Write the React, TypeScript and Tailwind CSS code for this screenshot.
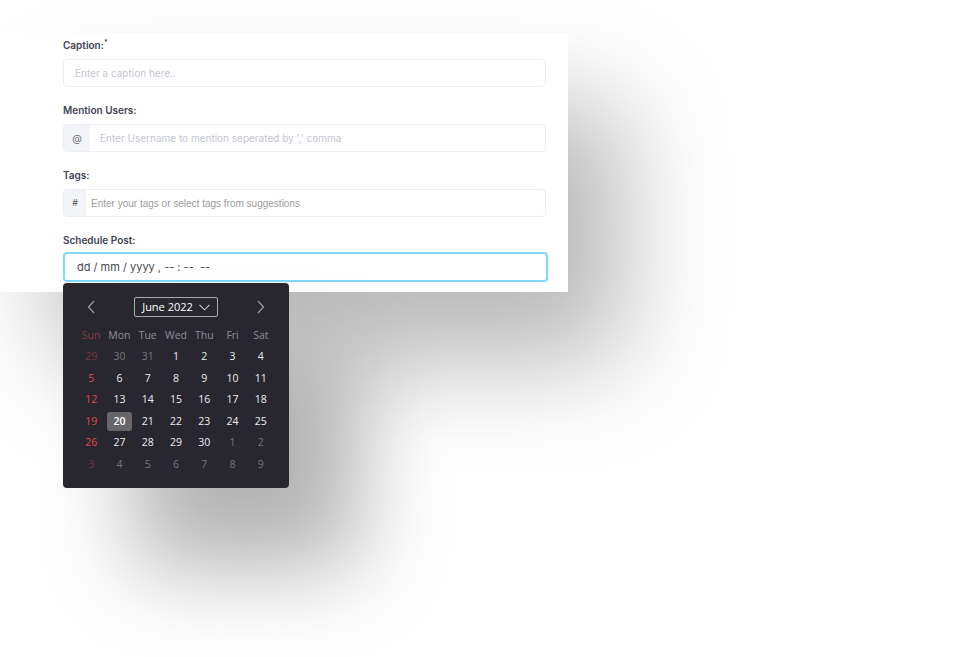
import React from 'react';

type Day = { d: number; muted?: boolean; sun?: boolean; sel?: boolean };

const weekdays = ['Sun', 'Mon', 'Tue', 'Wed', 'Thu', 'Fri', 'Sat'];

// 6 rows of June 2022, padded with May / July
function buildDays(): Day[] {
  const out: Day[] = [];
  [29, 30, 31].forEach((d) => out.push({ d, muted: true }));
  for (let d = 1; d <= 30; d++) out.push({ d, sel: d === 20 });
  for (let d = 1; d <= 9; d++) out.push({ d, muted: true });
  return out.map((x, i) => ({ ...x, sun: i % 7 === 0 }));
}

function Label({ children }: { children: React.ReactNode }) {
  return <div className="h-[14px] mb-[7px] text-[10px] leading-[14px] font-semibold text-[#3f4254]">{children}</div>;
}

function DayCell({ day }: { day: Day }) {
  let color = 'text-[#ececef]';
  if (day.muted && day.sun) color = 'text-[#7c3439]';
  else if (day.muted) color = 'text-[#77767c]';
  else if (day.sun) color = 'text-[#e5484d]';
  return (
    <div className="h-[21.5px] flex items-center justify-center">
      <span
        className={`w-[25px] h-[19px] flex items-center justify-center rounded-[3px] ${color} ${
          day.sel ? 'bg-[#67676b] font-semibold text-white' : ''
        }`}
      >
        {day.d}
      </span>
    </div>
  );
}

function Calendar() {
  const days = buildDays();
  return (
    <div
      className="absolute left-0 top-[50px] w-[226px] h-[205px] bg-[#28272f] rounded-[4px] px-[14px] shadow-[70px_80px_90px_rgba(0,0,0,0.3)] z-10"
      style={{ fontFamily: '"Open Sans", "Noto Sans", sans-serif' }}
    >
      <div className="h-[42px] pt-[6px] flex items-center justify-between px-[10px]">
        <svg width="8" height="14" viewBox="0 0 8 14" fill="none">
          <polyline points="7,1 1.5,7 7,13" stroke="#9a9aa0" strokeWidth="1.2" />
        </svg>
        <div className="w-[84px] h-[20px] border border-[#a9a9ad] rounded-[2px] flex items-center justify-center gap-[6px] text-[11px] text-white">
          <span>June 2022</span>
          <svg width="11" height="7" viewBox="0 0 11 7" fill="none">
            <polyline points="0.5,0.8 5.5,5.8 10.5,0.8" stroke="#c9c9cd" strokeWidth="1.1" />
          </svg>
        </div>
        <svg width="8" height="14" viewBox="0 0 8 14" fill="none">
          <polyline points="1,1 6.5,7 1,13" stroke="#9a9aa0" strokeWidth="1.2" />
        </svg>
      </div>
      <div className="grid grid-cols-7 text-[10.5px]">
        {weekdays.map((w, i) => (
          <div
            key={w}
            className={`h-[21.5px] flex items-center justify-center ${i === 0 ? 'text-[#8a3c41]' : 'text-[#8e8d93]'}`}
          >
            {w}
          </div>
        ))}
        {days.map((day, i) => (
          <DayCell key={i} day={day} />
        ))}
      </div>
    </div>
  );
}

export default function App() {
  return (
    <div
      className="w-[971px] h-[657px] bg-white overflow-hidden"
      style={{ fontFamily: 'Inter, "Noto Sans", sans-serif' }}
    >
      <div className="mt-[33px] w-[568px] bg-white pt-[5px] pb-[10px] pl-[63px] pr-[22px] shadow-[55px_70px_105px_rgba(0,0,0,0.28)] relative">
        <div className="flex flex-col gap-[16px]">
          <div>
            <Label>
              Caption:<sup className="text-[7px] -top-[4px]">*</sup>
            </Label>
            <div className="h-[28px] border border-[#eceef4] rounded-[4px] flex items-center px-[11px] text-[10px] text-[#c3c5cf]">
              Enter a caption here..
            </div>
          </div>

          <div>
            <Label>Mention Users:</Label>
            <div className="h-[28px] border border-[#eceef4] rounded-[4px] flex overflow-hidden">
              <div className="w-[26px] bg-[#f3f4f7] flex items-center justify-center text-[10px] text-[#6b6e7a]">@</div>
              <div className="flex-1 flex items-center pl-[10px] text-[10px] text-[#c3c5cf]">
                Enter Username to mention seperated by ',' comma
              </div>
            </div>
          </div>

          <div>
            <Label>Tags:</Label>
            <div className="h-[28px] border border-[#eceef4] rounded-[4px] flex overflow-hidden">
              <div className="w-[22px] bg-[#f3f4f7] flex items-center justify-center text-[9px] text-[#555]">#</div>
              <div
                className="flex-1 flex items-center pl-[5px] text-[10px] text-[#9b9b9b]"
                style={{ fontFamily: '"Liberation Sans", Arial, sans-serif' }}
              >
                Enter your tags or select tags from suggestions
              </div>
            </div>
          </div>

          <div className="relative">
            <div className="h-[14px] mb-[5px] text-[10px] leading-[14px] font-semibold text-[#3f4254]">Schedule Post:</div>
            <div className="h-[30px] -mr-[2px] border-2 border-[#7fd9fb] rounded-[4px] flex items-center pl-[12px] text-[11px] text-[#4a4a52] whitespace-pre">
              {'dd / mm / yyyy , -- : --  --'}
            </div>
            <Calendar />
          </div>
        </div>
      </div>
    </div>
  );
}
